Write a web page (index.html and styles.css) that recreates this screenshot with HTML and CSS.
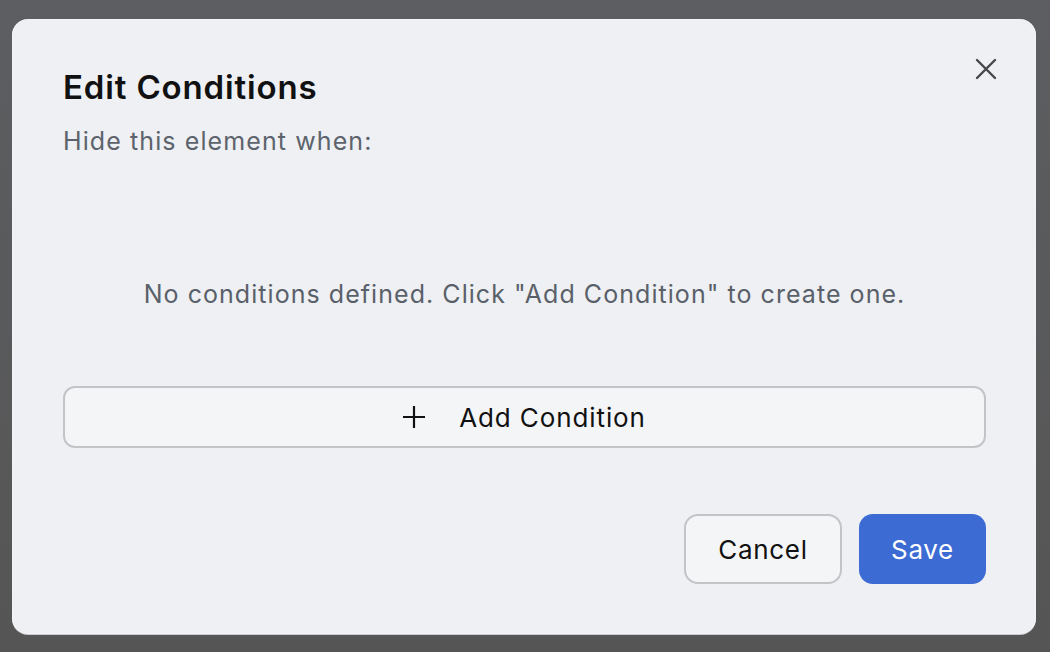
FILE: index.html
```html
<!DOCTYPE html>
<html lang="en">
<head>
    <meta charset="UTF-8">
    <meta name="viewport" content="width=device-width, initial-scale=1.0">
    <title>Edit Conditions</title>
    <link rel="stylesheet" href="styles.css">
</head>
<body>
    <div class="dialog">
        <button class="close-btn" aria-label="Close">
            <svg width="22" height="22" viewBox="0 0 22 22">
                <path d="M2 2 L20 20 M20 2 L2 20" stroke="#464749" stroke-width="2.4" stroke-linecap="round" fill="none"/>
            </svg>
        </button>
        <h1>Edit Conditions</h1>
        <p class="subtitle">Hide this element when:</p>

        <p class="empty">No conditions defined. Click "Add Condition" to create one.</p>

        <button class="add-btn">
            <svg width="22" height="22" viewBox="0 0 22 22">
                <path d="M11 0 V22 M0 11 H22" stroke="#111" stroke-width="2.2" fill="none"/>
            </svg>
            <span>Add Condition</span>
        </button>

        <div class="footer">
            <button class="btn btn-cancel">Cancel</button>
            <button class="btn btn-save">Save</button>
        </div>
    </div>
</body>
</html>
```

FILE: styles.css
```css
body {
    font-family: 'Inter', 'Noto Sans', sans-serif;
    background: linear-gradient(to bottom, #5d5e61, #555555);
    margin: 0;
    height: 652px;
    overflow: hidden;
}

.dialog {
    position: relative;
    box-sizing: border-box;
    width: 1024px;
    height: 615px;
    margin: 19px 0 0 12px;
    padding: 48px 50px 50px 51px;
    background: #eef0f3;
    border-radius: 16px;
    box-shadow: 0 1px 0 #c9cbcf, 0 0 0 1px rgba(255, 255, 255, 0.25) inset;
    display: flex;
    flex-direction: column;
}

.close-btn {
    position: absolute;
    top: 39px;
    right: 39px;
    width: 22px;
    height: 22px;
    padding: 0;
    border: none;
    background: none;
    cursor: pointer;
}

.close-btn svg {
    display: block;
}

h1 {
    margin: 0;
    font-size: 33px;
    line-height: 40px;
    font-weight: 600;
    color: #111;
    letter-spacing: 0.85px;
}

.subtitle {
    margin: 18px 0 0;
    font-size: 25px;
    line-height: 32px;
    color: #5d636c;
    letter-spacing: 1.1px;
}

.empty {
    margin: 121px 0 0;
    text-align: center;
    font-size: 25px;
    line-height: 32px;
    color: #5a6069;
    letter-spacing: 1.05px;
}

.add-btn {
    margin-top: 76px;
    height: 62px;
    display: flex;
    align-items: center;
    justify-content: center;
    gap: 34px;
    background: #f4f5f7;
    border: 2px solid #c3c4c8;
    border-radius: 12px;
    font-family: inherit;
    font-size: 26px;
    letter-spacing: 0.9px;
    color: #111;
    cursor: pointer;
}

.footer {
    margin-top: 66px;
    display: flex;
    justify-content: flex-end;
    gap: 17px;
}

.btn {
    height: 70px;
    border-radius: 14px;
    font-family: inherit;
    font-size: 26px;
    letter-spacing: 0.7px;
    cursor: pointer;
}

.btn-cancel {
    width: 158px;
    background: #f4f5f7;
    border: 2px solid #c3c4c8;
    color: #111;
}

.btn-save {
    width: 127px;
    background: #3d6bd4;
    border: none;
    color: #fff;
}
```
